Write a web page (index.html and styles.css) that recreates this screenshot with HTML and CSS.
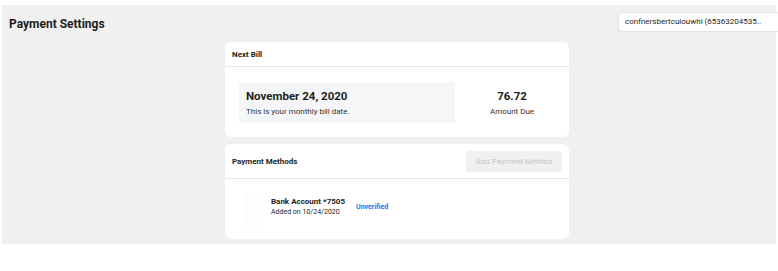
FILE: index.html
```html
<!DOCTYPE html>
<html>
<head>
<meta charset="utf-8">
<link rel="stylesheet" href="styles.css">
</head>
<body>
<div class="page">
  <div class="topbar">
    <h1 class="title">Payment Settings</h1>
    <div class="account-select">confnersbertculouwhi (65363204535..</div>
  </div>
  <div class="cards">
    <section class="card">
      <div class="card-head card-head-small">
        <span class="card-title">Next Bill</span>
      </div>
      <div class="bill-body">
        <div class="bill-date">
          <div class="big">November 24, 2020</div>
          <div class="sub">This is your monthly bill date.</div>
        </div>
        <div class="bill-amount">
          <div class="big">76.72</div>
          <div class="sub">Amount Due</div>
        </div>
      </div>
    </section>
    <section class="card">
      <div class="card-head card-head-large">
        <span class="card-title">Payment Methods</span>
        <button class="add-btn" disabled>Add Payment Method</button>
      </div>
      <div class="method-body">
        <div class="method-icon"></div>
        <div class="method-info">
          <div class="method-name">Bank Account *7505</div>
          <div class="method-added">Added on 10/24/2020</div>
        </div>
        <span class="method-status">Unverified</span>
      </div>
    </section>
  </div>
</div>
</body>
</html>
```

FILE: styles.css
```css
html, body {
  margin: 0;
  padding: 0;
  background: #ffffff;
  overflow: hidden;
}
body {
  font-family: Roboto, "Liberation Sans", Arial, sans-serif;
  color: #1c1e21;
}
.page {
  margin: 5px 2px 0 2px;
  height: 239px;
  background: #f0f0f0;
  display: flex;
  flex-direction: column;
}
.topbar {
  display: flex;
  justify-content: space-between;
  align-items: flex-start;
  height: 37px;
}
.title {
  margin: 12px 0 0 7px;
  font-size: 12px;
  font-weight: 700;
  line-height: 14px;
  color: #1c1e21;
}
.account-select {
  margin-top: 7px;
  margin-right: -22px;
  width: 180px;
  height: 20px;
  box-sizing: border-box;
  background: #fff;
  border: 1px solid #e2e2e2;
  border-radius: 4px;
  font-size: 8px;
  line-height: 18px;
  padding-left: 6px;
  color: #1c1e21;
  white-space: nowrap;
  overflow: hidden;
}
.cards {
  margin-left: 223px;
  width: 344px;
  display: flex;
  flex-direction: column;
  gap: 7px;
}
.card {
  background: #fff;
  border-radius: 6px;
  overflow: hidden;
}
.card-head {
  display: flex;
  align-items: center;
  justify-content: space-between;
  padding: 0 7px 0 7px;
  border-bottom: 1px solid #e6e6e6;
}
.card-head-small { height: 24px; }
.card-head-large { height: 34px; }
.card-title {
  font-size: 8px;
  font-weight: 700;
  color: #1c1e21;
}
.add-btn {
  height: 21px;
  width: 96px;
  padding: 0;
  border: none;
  border-radius: 4px;
  background: #f0f0f0;
  color: #c6c6c6;
  font-family: inherit;
  font-size: 8px;
}
.bill-body {
  display: flex;
  align-items: center;
  padding: 15px 0 14px 14px;
}
.bill-date {
  width: 216px;
  height: 41px;
  box-sizing: border-box;
  background: #f5f6f7;
  border-radius: 2px;
  padding: 7px 0 0 7px;
}
.bill-amount {
  flex: 1;
  text-align: center;
  padding-top: 1px;
}
.big {
  font-size: 11.5px;
  font-weight: 700;
  line-height: 15px;
  color: #1c1e21;
}
.sub {
  margin-top: 3px;
  font-size: 8px;
  line-height: 10px;
  color: #333333;
}
.method-body {
  height: 60px;
  display: flex;
  align-items: center;
  padding-left: 18px;
}
.method-icon {
  width: 20px;
  height: 34px;
  margin-right: 8px;
  background: #fdfdfd;
}
.method-info {
  margin-top: -5px;
}
.method-name {
  font-size: 8px;
  font-weight: 700;
  line-height: 11px;
  color: #1c1e21;
}
.method-added {
  font-size: 7px;
  line-height: 10px;
  color: #222;
}
.method-status {
  margin-left: 11px;
  margin-top: -4px;
  font-size: 7px;
  font-weight: 700;
  color: #1877f2;
}
```
